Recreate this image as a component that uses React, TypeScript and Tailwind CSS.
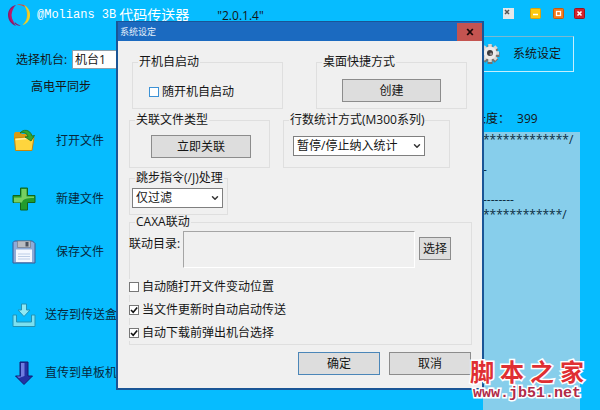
import React from 'react';
import { ChevronDown } from 'lucide-react';

const Logo = () => (
  <svg viewBox="0 0 24 24" className="w-6 h-6" fill="none" aria-hidden="true">
    <path d="M9 2C4 3 1 7 1 12c0 5 3 9 8 11C6 19 4 16 4 12c0-4 2-8 5-10Z" fill="#8a1a6c" />
    <path d="M9 2C6 5 5 8 4.500 12c0 3 1 5 3 8L5 19C2 15 2 10 3 7Z" fill="#c01866" />
    <path d="M10 1.500c3-.5 7 0 9 2l-2 0c-2-1-4-1.500-7-2Z" fill="#e8432f" />
    <path d="M17 2c4 2 6 6 5.500 11-.5 4-3 7-7 9 3-3 4.500-6 4.500-10 0-4-1-7-3-10Z" fill="#f5b21f" />
    <path d="M18 3c3 4 3.500 8 2 13-.5 2-2 4-4.500 6 5-1 8-6 7.500-11-.5-4-2-6-5-8Z" fill="#e8d32c" />
    <path d="M7 20c2 2 4 3 7 2.500-2-.5-4-1-5.500-3Z" fill="#8a1a6c" />
  </svg>
);

const FolderIcon = () => (
  <svg viewBox="0 0 24 24" className="w-6 h-6" aria-hidden="true">
    <path d="M2 5l1-2h5l2 2h10v6H2Z" fill="#d99a12" />
    <path d="M2.500 9 20 7.500l2 1-2 13H3.500Z" fill="#ffd53d" stroke="#c88709" strokeWidth="1" />
    <path d="M3.500 10.500 20 9" stroke="#fff0a0" strokeWidth="1.500" />
    <path d="M8 4c3-4 10-4 12 3l2.500-.5L19 12l-6-4 3-.3C15 4 12 3 8 4Z" fill="#35a52f" stroke="#176d1c" strokeWidth=".8" />
  </svg>
);

const PlusIcon = () => (
  <svg viewBox="0 0 24 24" className="w-6 h-6" aria-hidden="true">
    <path d="M8.500 1h7v7.500H23v7h-7.500V23h-7v-7.500H1v-7h7.500Z" fill="#239b2b" stroke="#11651c" />
    <path d="M9.500 2h5v7.500H22v1.500c-8 0-11 1-12 4.500H2v-5h7.500Z" fill="#76cf62" />
  </svg>
);

const SaveIcon = () => (
  <svg viewBox="0 0 24 24" className="w-6 h-6" aria-hidden="true">
    <path d="M2.500 1h18L23 3.500V23H1V2.500Z" fill="#8dabd8" stroke="#385b94" />
    <path d="M5.500 1h13v6.500h-13Z" fill="#b9bcc2" stroke="#757b88" strokeWidth=".7" />
    <path d="M13.500 2h3v4.500h-3Z" fill="#4b505c" />
    <path d="M4 9.500h16V22H4Z" fill="#f4f8ff" />
    <path d="M6 14h12M6 16.500h12M6 19h12" stroke="#bccde6" />
  </svg>
);

const InboxIcon = () => (
  <svg viewBox="0 0 24 24" className="w-6 h-6" aria-hidden="true">
    <path d="M1 12h3.500v7h15v-7H23v11.500H1Z" fill="#7ce0f0" stroke="#2293b5" />
    <path d="M9.500 1h5v6H18l-6 6.500L6 7h3.500Z" fill="#8fe8f3" stroke="#2293b5" />
  </svg>
);

const ArrowIcon = () => (
  <svg viewBox="0 0 24 24" className="w-6 h-6" aria-hidden="true">
    <path d="M8 1h8v14h4.500L12 23.500 3.500 15H8Z" fill="#2431a4" stroke="#131c70" />
    <path d="M9 2h3.500v13L7 17l-2-1.500h4Z" fill="#6f7de0" />
  </svg>
);

const GearIcon = () => (
  <svg viewBox="0 0 24 24" className="w-6 h-6" aria-hidden="true">
    <g stroke="#77736f" strokeWidth="5">
      <path d="M12 3v19M2.500 12.500h19M5.500 6l13 13M18.500 6l-13 13" />
    </g>
    <g stroke="#d9d7d4" strokeWidth="3.500">
      <path d="M12 2v18M3 11h18M5.500 4.500l13 13M18.500 4.500l-13 13" />
    </g>
    <circle cx="12" cy="11" r="6.500" fill="#ecebea" />
    <circle cx="12" cy="11" r="3" fill="#3c3a3c" />
    <circle cx="13" cy="12" r="1.500" fill="#8e8c8c" />
  </svg>
);

const menu = [
  { label: '打开文件', icon: <FolderIcon />, style: 'mt-[34px] gap-5' },
  { label: '新建文件', icon: <PlusIcon />, style: 'mt-[34px] gap-5' },
  { label: '保存文件', icon: <SaveIcon />, style: 'mt-[29px] gap-5' },
  { label: '送存到传送盒', icon: <InboxIcon />, style: 'mt-[39px] gap-[9px]' },
  { label: '直传到单板机', icon: <ArrowIcon />, style: 'mt-[34px] gap-[9px]' },
];

const code = [
  '*************/',
  '',
  '-',
  '',
  '--------',
  '************/',
].join('\n');

type GroupProps = {
  title: string;
  className?: string;
  bodyClass: string;
  children: React.ReactNode;
};

const Group = ({ title, className = '', bodyClass, children }: GroupProps) => (
  <fieldset className={`min-w-0 border border-[#dfdfdf] ${className}`}>
    <legend className="ml-[5px] px-px leading-4 whitespace-nowrap">{title}</legend>
    <div className={bodyClass}>{children}</div>
  </fieldset>
);

const PushButton = ({ children, className = '' }: { children: React.ReactNode; className?: string }) => (
  <button type="button" className={`h-[23px] bg-[#dddddd] border border-[#8c8c8c] leading-4 whitespace-nowrap ${className}`}>
    {children}
  </button>
);

const Combo = ({ label, value }: { label: string; value: string }) => (
  <div className="relative">
    <select aria-label={label} className="block w-full h-5 appearance-none bg-white border border-[#7f7f7f] pl-[3px] leading-4">
      <option>{value}</option>
    </select>
    <ChevronDown className="absolute right-[3px] top-[5px] w-2.5 h-2.5 text-[#333] pointer-events-none" strokeWidth={3.5} />
  </div>
);

const Check = ({ label, checked = false, blue = false }: { label: string; checked?: boolean; blue?: boolean }) => (
  <label className="flex items-center gap-[3px] leading-4 whitespace-nowrap bg-[#f0f0f0]">
    <span className="relative flex">
      <input
        type="checkbox"
        defaultChecked={checked}
        className={`peer appearance-none w-2.5 h-2.5 bg-white border ${blue ? 'border-[#3c92d6]' : 'border-[#777]'}`}
      />
      <svg viewBox="0 0 10 10" className="absolute inset-0 w-2.5 h-2.5 hidden peer-checked:block pointer-events-none" fill="none">
        <path d="M2 5l2.200 2.300L8.200 2.500" stroke="#111" strokeWidth="1.600" />
      </svg>
    </span>
    {label}
  </label>
);

const SettingsDialog = () => (
  <div
    role="dialog"
    aria-label="系统设定"
    className="absolute inset-x-[116px] top-[21px] bg-[#f0f0f0] border-2 border-t border-[#1a5596]"
  >
    <div className="h-[19px] flex items-center bg-[#1b6ac0] pl-0.5">
      <h2 className="flex-1 text-[9px] leading-4 text-[#e4effa]">系统设定</h2>
      <button type="button" aria-label="关闭" className="w-[25px] h-[18px] flex items-center justify-center bg-[#c45450]">
        <svg viewBox="0 0 8 8" className="w-2 h-2">
          <path d="M1.200 1l5.600 6M6.800 1l-5.600 6" stroke="#1c0808" strokeWidth="1.800" />
        </svg>
      </button>
    </div>
    <div className="pt-[13px] pl-[11px] pr-[10px] pb-[13px]">
      <div className="flex gap-[33px] pl-[3px] pr-[5px]">
        <Group title="开机自启动" className="flex-1" bodyClass="pt-3.5 pb-2 pl-4">
          <Check label="随开机自启动" blue />
        </Group>
        <Group title="桌面快捷方式" className="flex-1" bodyClass="pt-[9px] pb-1.5 px-[25px]">
          <PushButton className="w-full">创建</PushButton>
        </Group>
      </div>
      <div className="flex gap-[13px] mt-[3px] pr-[22px]">
        <Group title="关联文件类型" className="w-[141px]" bodyClass="pt-[7px] pb-[9px] pl-[21px] pr-[18px]">
          <PushButton className="w-full">立即关联</PushButton>
        </Group>
        <Group title="行数统计方式(M300系列)" className="flex-1" bodyClass="pt-2 pb-[11px] pl-[9px] pr-6">
          <Combo label="行数统计方式" value="暂停/停止纳入统计" />
        </Group>
      </div>
      <Group title="跳步指令(/J)处理" className="w-[99px] mt-0.5" bodyClass="pt-0.5 pb-1.5 pl-0.5 pr-1">
        <Combo label="跳步指令处理" value="仅过滤" />
      </Group>
      <Group title="CAXA联动" className="-mt-px" bodyClass="pt-px pb-[3px] pr-5">
        <div className="flex -ml-px">
          <label htmlFor="linkdir" className="w-[54px] pt-[5px] leading-4 whitespace-nowrap">联动目录:</label>
          <input
            id="linkdir"
            readOnly
            className="flex-1 min-w-0 h-[37px] border border-t-[#a5a5a5] border-l-[#a5a5a5] border-r-white border-b-white"
          />
          <PushButton className="w-8 mt-1.5 ml-1">选择</PushButton>
        </div>
        <div className="flex flex-col items-start gap-[7px] mt-[11px] -ml-px">
          <Check label="自动随打开文件变动位置" />
          <Check label="当文件更新时自动启动传送" checked />
          <Check label="自动下载前弹出机台选择" checked />
        </div>
      </Group>
      <div className="flex justify-end gap-[9px] mt-[7px] pr-px">
        <button type="button" className="w-[82px] h-[23px] bg-[#dddddd] border border-[#4b86b8] leading-4">确定</button>
        <PushButton className="w-[82px]">取消</PushButton>
      </div>
    </div>
  </div>
);

const Watermark = () => (
  <a
    href="#"
    className="absolute bottom-2 right-4 w-[114px] text-center font-bold [paint-order:stroke_fill] [-webkit-text-stroke:3px_white]"
  >
    <span className="flex justify-between text-[24px] leading-7 text-[#df2f33]">
      <span>脚</span>
      <span>本</span>
      <span>之</span>
      <span>家</span>
    </span>
    <span className="block font-['Liberation_Mono',monospace] text-[15px] leading-4 text-[#b02a48]">www.jb51.net</span>
  </a>
);

const App = () => {
  return (
    <div className="relative min-h-screen flex flex-col bg-[#06bcff] text-[#151515] text-[12px] font-['Open_Sans','Noto_Sans_CJK_SC',sans-serif]">
      <header className="h-[30px] flex items-center pl-[7px] pr-[15px]">
        <Logo />
        <h1 className="ml-1.5 flex items-center gap-[3px] leading-5 text-white text-[14px] whitespace-nowrap">
          <span className="font-['Liberation_Mono',monospace] text-[12px]">@Molians 3B</span>
          <span>代码传送器</span>
        </h1>
        <span className="ml-7 pt-0.5 leading-5">"2.0.1.4"</span>
        <div className="ml-auto flex items-center">
          <button type="button" aria-label="换肤" className="mr-4">
            <svg viewBox="0 0 11 11" className="w-[11px] h-[11px] -mt-1">
              <path d="M0 0h11v11H0Z" fill="#e4e8ea" />
              <path d="M2 2l4 4M6 2 2 6" stroke="#555" strokeWidth="1.500" />
            </svg>
          </button>
          <button type="button" aria-label="最小化" className="mr-3">
            <svg viewBox="0 0 11 11" className="w-[11px] h-[11px] -mt-1">
              <rect x=".5" y=".5" width="10" height="10" rx="1" fill="#fbc911" stroke="#d8a010" />
              <path d="M3 6.500h5" stroke="#fff" strokeWidth="1.500" />
            </svg>
          </button>
          <button type="button" aria-label="最大化" className="mr-2.5">
            <svg viewBox="0 0 11 11" className="w-[11px] h-[11px] -mt-1">
              <rect x=".5" y=".5" width="10" height="10" rx="1" fill="#f27a1c" stroke="#c65a10" />
              <rect x="3.500" y="3.500" width="4" height="4" fill="none" stroke="#fff" strokeWidth="1.300" />
            </svg>
          </button>
          <button type="button" aria-label="退出">
            <svg viewBox="0 0 11 11" className="w-[11px] h-[11px] -mt-1">
              <rect x=".5" y=".5" width="10" height="10" rx="1" fill="#d3222d" stroke="#9a1420" />
              <path d="M3.500 3.500l4 4M7.500 3.500l-4 4" stroke="#fff" strokeWidth="1.600" />
            </svg>
          </button>
        </div>
      </header>

      <div className="flex-1 flex">
        <nav className="flex-1 pt-5">
          <div className="flex items-center gap-1 pl-4">
            <label htmlFor="machine" className="w-[52px] leading-4 whitespace-nowrap">选择机台:</label>
            <select id="machine" className="w-24 h-[19px] appearance-none bg-white border border-[#8aa0ad] pl-0.5 leading-4">
              <option>机台1</option>
            </select>
          </div>
          <p className="mt-2.5 pl-[31px] leading-4">高电平同步</p>
          {menu.map((item) => (
            <button key={item.label} type="button" className={`flex items-center pl-3 leading-4 text-[#06283c] ${item.style}`}>
              {item.icon}
              {item.label}
            </button>
          ))}
        </nav>

        <section className="w-[126px] flex flex-col pt-1.5">
          <button
            type="button"
            className="h-9 mr-[26px] flex items-center gap-[11px] pl-[3px] border border-t-[#79b9d2] border-l-[#79b9d2] border-r-[#c4effd] border-b-[#c4effd]"
          >
            <GearIcon />
            系统设定
          </button>
          <p className="mt-[39px] leading-4 flex gap-[7px]">
            <span>长度：</span>
            <span>399</span>
          </p>
          <textarea
            readOnly
            aria-label="代码"
            value={code}
            className="flex-1 min-h-0 mt-[5px] ml-[9px] mr-5 resize-none overflow-hidden whitespace-pre bg-[#87ceeb] leading-[15px] text-[#0b2b40]"
          />
        </section>
      </div>

      <SettingsDialog />
      <Watermark />
    </div>
  );
};

export default App;
